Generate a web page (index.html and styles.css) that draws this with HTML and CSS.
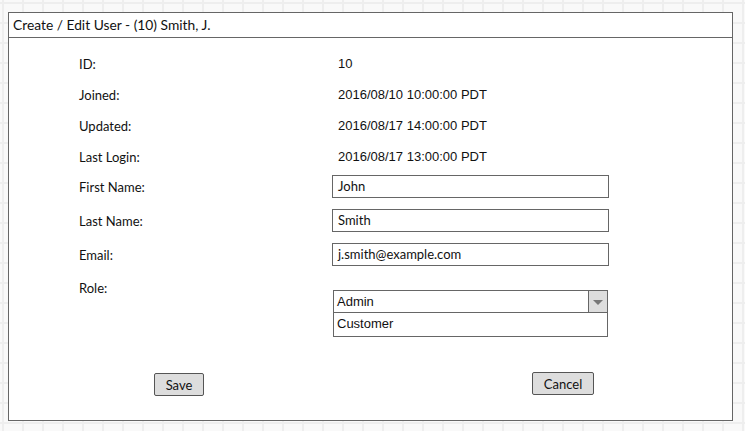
FILE: index.html
```html
<!DOCTYPE html>
<html lang="en">
<head>
<meta charset="utf-8">
<title>Create / Edit User</title>
<link rel="stylesheet" href="styles.css">
</head>
<body>
<div class="panel">
  <div class="titlebar">Create / Edit User - (10) Smith, J.</div>
  <div class="content">
    <div class="info">
      <div class="row"><span class="label">ID:</span><span class="value">10</span></div>
      <div class="row"><span class="label">Joined:</span><span class="value">2016/08/10 10:00:00 PDT</span></div>
      <div class="row"><span class="label">Updated:</span><span class="value">2016/08/17 14:00:00 PDT</span></div>
      <div class="row"><span class="label">Last Login:</span><span class="value">2016/08/17 13:00:00 PDT</span></div>
    </div>
    <div class="fields">
      <div class="frow"><span class="label">First Name:</span><div class="input">John</div></div>
      <div class="frow"><span class="label">Last Name:</span><div class="input">Smith</div></div>
      <div class="frow"><span class="label">Email:</span><div class="input">j.smith@example.com</div></div>
      <div class="rrow">
        <span class="label role-label">Role:</span>
        <div class="dropdown">
          <div class="select"><span class="selected">Admin</span><span class="arrow"><span class="tri"></span></span></div>
          <div class="option">Customer</div>
        </div>
      </div>
    </div>
    <div class="buttons">
      <button class="btn btn-save">Save</button>
      <button class="btn btn-cancel">Cancel</button>
    </div>
  </div>
</div>
</body>
</html>
```
FILE: styles.css
```css
html, body {
  height: 100%;
}
body {
  margin: 0;
  padding: 12px 0 0 8px;
  box-sizing: border-box;
  overflow: hidden;
  background-color: #f9f9f9;
  background-image:
    linear-gradient(to right, #eeeeee 2px, transparent 2px),
    linear-gradient(to bottom, #eeeeee 2px, transparent 2px);
  background-size: 20px 20px;
  background-position: 2px 2px;
  font-family: "Lato", "Liberation Sans", sans-serif;
  font-size: 13px;
  color: #111;
}
.panel {
  width: 725px;
  height: 409px;
  box-sizing: border-box;
  border: 1px solid #666;
  background: #fff;
}
.titlebar {
  height: 24px;
  line-height: 24px;
  border-bottom: 1px solid #666;
  padding-left: 4px;
  font-size: 13.8px;
}
.content {
  padding: 10px 0 0 70px;
}
.row {
  display: grid;
  grid-template-columns: 253px 1fr;
  height: 31px;
  align-items: center;
}
.value {
  padding-left: 6px;
  font-family: "Liberation Sans", Arial, sans-serif;
}
.fields {
  margin-top: 3px;
}
.frow {
  display: grid;
  grid-template-columns: 253px 277px;
  height: 23px;
  align-items: center;
  margin-bottom: 11px;
}
.input {
  box-sizing: border-box;
  height: 23px;
  border: 1px solid #666;
  padding-left: 5px;
  line-height: 21px;
}
.rrow {
  display: grid;
  grid-template-columns: 253px 277px;
  align-items: start;
}
.role-label {
  line-height: 23px;
}
.dropdown {
  margin: 13px 0 0 1px;
  width: 275px;
  font-family: "Liberation Sans", Arial, sans-serif;
}
.select {
  display: flex;
  box-sizing: border-box;
  height: 23px;
  border: 1px solid #666;
}
.selected {
  flex: 1;
  padding-left: 3px;
  line-height: 21px;
}
.arrow {
  width: 18px;
  border-left: 1px solid #666;
  background: #dddddd;
  display: flex;
  align-items: center;
  justify-content: center;
}
.tri {
  width: 0;
  height: 0;
  border-left: 5px solid transparent;
  border-right: 5px solid transparent;
  border-top: 5px solid #777;
  margin-top: 1px;
}
.option {
  box-sizing: border-box;
  height: 24px;
  border: 1px solid #666;
  border-top: none;
  padding-left: 3px;
  line-height: 22px;
}
.buttons {
  display: flex;
  justify-content: space-between;
  align-items: flex-start;
  margin-top: 35px;
  padding: 0 138px 0 75px;
}
.btn {
  box-sizing: border-box;
  height: 23px;
  padding: 0;
  border: 1px solid #555;
  border-radius: 2px;
  background: #dddddd;
  font-family: "Lato", "Liberation Sans", sans-serif;
  font-size: 13px;
  color: #111;
}
.btn-save {
  width: 50px;
  margin-top: 1px;
}
.btn-cancel {
  width: 62px;
}
```
